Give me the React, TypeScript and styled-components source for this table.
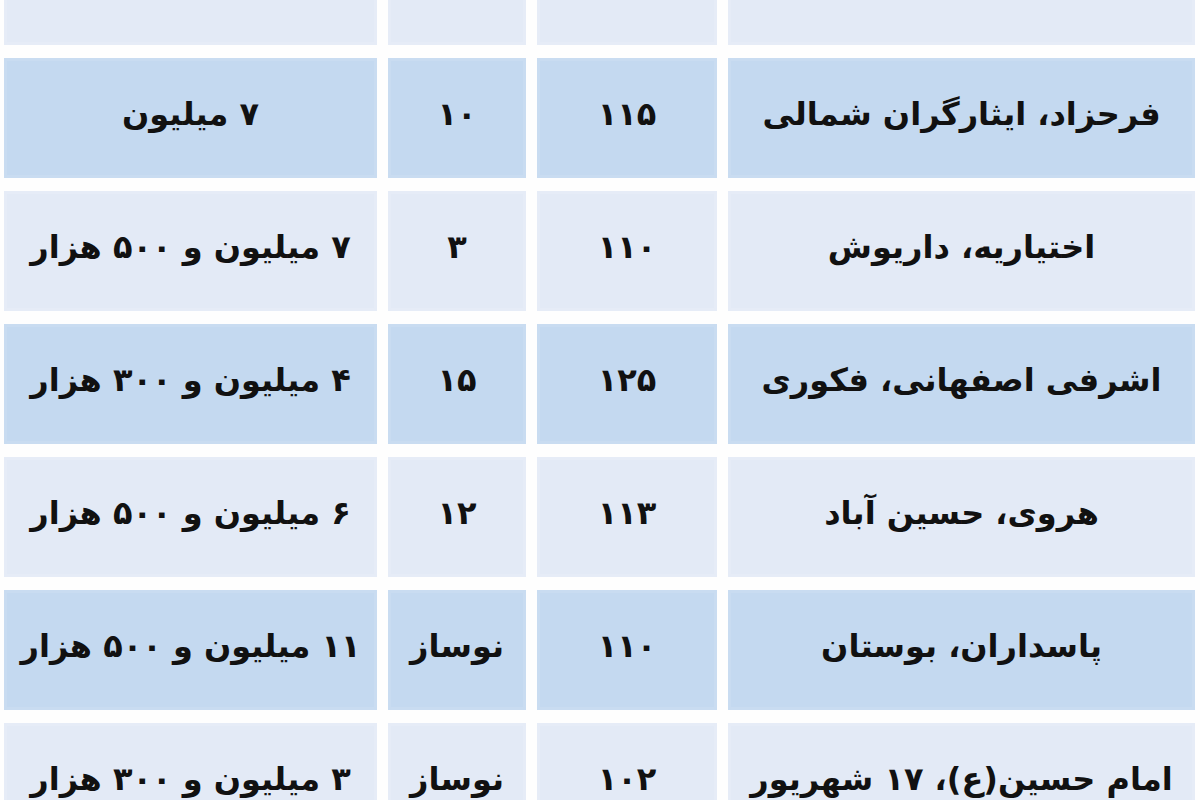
import styled, { createGlobalStyle } from "styled-components";

type Row = {
  place: string;
  area: string;
  age: string;
  price: string;
};

const rows: Row[] = [
  { place: "سعادت آباد، سرو غربی", area: "۱۲۰", age: "۵", price: "۸ میلیون" },
  { place: "فرحزاد، ایثارگران شمالی", area: "۱۱۵", age: "۱۰", price: "۷ میلیون" },
  { place: "اختیاریه، داریوش", area: "۱۱۰", age: "۳", price: "۷ میلیون و ۵۰۰ هزار" },
  { place: "اشرفی اصفهانی، فکوری", area: "۱۲۵", age: "۱۵", price: "۴ میلیون و ۳۰۰ هزار" },
  { place: "هروی، حسین آباد", area: "۱۱۳", age: "۱۲", price: "۶ میلیون و ۵۰۰ هزار" },
  { place: "پاسداران، بوستان", area: "۱۱۰", age: "نوساز", price: "۱۱ میلیون و ۵۰۰ هزار" },
  { place: "امام حسین(ع)، ۱۷ شهریور", area: "۱۰۲", age: "نوساز", price: "۳ میلیون و ۳۰۰ هزار" },
];

export default function App() {
  return (
    <>
      <GlobalStyle />
      <Page>
        <Table dir="rtl">
          {rows.map((r, i) => (
            <TableRow key={i}>
              <Cell $blue={i % 2 === 1}>{r.place}</Cell>
              <Cell $blue={i % 2 === 1}>{r.area}</Cell>
              <Cell $blue={i % 2 === 1}>{r.age}</Cell>
              <Cell $blue={i % 2 === 1}>{r.price}</Cell>
            </TableRow>
          ))}
        </Table>
      </Page>
    </>
  );
}

const GlobalStyle = createGlobalStyle`
  html, body {
    margin: 0;
    padding: 0;
    background: #ffffff;
  }
  body {
    font-family: "DejaVu Sans", "Noto Sans", sans-serif;
  }
`;

const Page = styled.div`
  width: 1200px;
  height: 800px;
  overflow: hidden;
  background: #fefefe;
`;

// first row is cut off by the top of the picture
const Table = styled.div`
  display: flex;
  flex-direction: column;
  gap: 13px;
  margin-top: -75px;
  padding: 0 5px 0 4px;
`;

const TableRow = styled.div`
  display: grid;
  grid-template-columns: 467px 180px 138px 373px;
  column-gap: 11px;
  height: 120px;
`;

const Cell = styled.div<{ $blue?: boolean }>`
  display: flex;
  align-items: center;
  justify-content: center;
  background: ${({ $blue }) => ($blue ? "#c4d9f0" : "#e3eaf6")};
  box-shadow: inset 0 0 0 3px ${({ $blue }) => ($blue ? "#c9dcf1" : "#e6ecf7")};
  color: #111111;
  font-size: 32px;
  font-weight: 700;
  white-space: nowrap;
  padding-bottom: 8px;
`;
